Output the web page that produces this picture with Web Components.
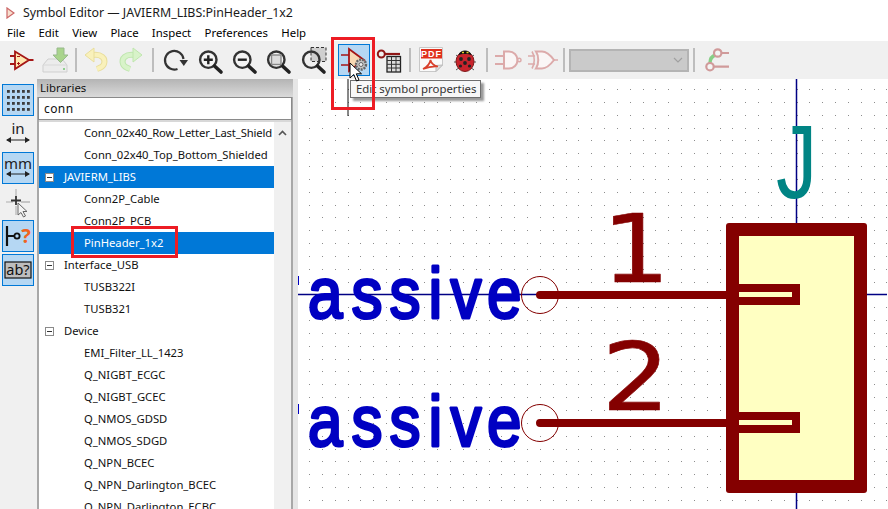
<!DOCTYPE html>
<html>
<head>
<meta charset="utf-8">
<title>Symbol Editor</title>
<style>
html,body{margin:0;padding:0;background:#f0f0f0;}
body{width:888px;height:509px;overflow:hidden;position:relative;font-family:"Noto Sans","Open Sans",sans-serif;}
</style>
</head>
<body>
<editor-app>
    <title-bar>Symbol Editor — JAVIERM_LIBS:PinHeader_1x2</title-bar>
    <menu-bar>
        <menu-item>File</menu-item><menu-item>Edit</menu-item><menu-item>View</menu-item><menu-item>Place</menu-item><menu-item>Inspect</menu-item><menu-item>Preferences</menu-item><menu-item>Help</menu-item>
    </menu-bar>
    <top-toolbar>
        <tool-btn icon="symbol"></tool-btn>
        <tool-btn icon="save"></tool-btn>
        <tool-sep></tool-sep>
        <tool-btn icon="undo"></tool-btn>
        <tool-btn icon="redo"></tool-btn>
        <tool-sep wide></tool-sep>
        <tool-btn icon="refresh"></tool-btn>
        <tool-btn icon="zoomin"></tool-btn>
        <tool-btn icon="zoomout"></tool-btn>
        <tool-btn icon="zoomfit"></tool-btn>
        <tool-btn icon="zoomsel"></tool-btn>
        <tool-sep blank></tool-sep>
        <tool-btn icon="props" active></tool-btn>
        <tool-btn icon="pintable"></tool-btn>
        <tool-sep style="width:8.6px"></tool-sep>
        <tool-btn icon="pdf"></tool-btn>
        <tool-btn icon="bug"></tool-btn>
        <tool-sep style="width:8px"></tool-sep>
        <tool-btn icon="and"></tool-btn>
        <tool-btn icon="or"></tool-btn>
        <tool-sep wide></tool-sep>
        <unit-select></unit-select>
        <tool-sep wide></tool-sep>
        <tool-btn icon="pinswap"></tool-btn>
    </top-toolbar>
    <work-area>
        <side-toolbar>
            <side-btn icon="grid" active></side-btn>
            <side-btn icon="inch"></side-btn>
            <side-btn icon="mm" active></side-btn>
            <side-btn icon="cross"></side-btn>
            <side-btn icon="pinq" active></side-btn>
            <side-btn icon="abq" active></side-btn>
        </side-toolbar>
        <lib-panel>
            <tree-row leaf style="letter-spacing:-.12px">Conn_02x40_Row_Letter_Last_Shield</tree-row>
            <tree-row leaf>Conn_02x40_Top_Bottom_Shielded</tree-row>
            <tree-row selected>JAVIERM_LIBS</tree-row>
            <tree-row leaf>Conn2P_Cable</tree-row>
            <tree-row leaf>Conn2P_PCB</tree-row>
            <tree-row leaf selected>PinHeader_1x2</tree-row>
            <tree-row>Interface_USB</tree-row>
            <tree-row leaf>TUSB322I</tree-row>
            <tree-row leaf>TUSB321</tree-row>
            <tree-row>Device</tree-row>
            <tree-row leaf>EMI_Filter_LL_1423</tree-row>
            <tree-row leaf>Q_NIGBT_ECGC</tree-row>
            <tree-row leaf>Q_NIGBT_GCEC</tree-row>
            <tree-row leaf>Q_NMOS_GDSD</tree-row>
            <tree-row leaf>Q_NMOS_SDGD</tree-row>
            <tree-row leaf>Q_NPN_BCEC</tree-row>
            <tree-row leaf>Q_NPN_Darlington_BCEC</tree-row>
            <tree-row leaf>Q_NPN_Darlington_ECBC</tree-row>
        </lib-panel>
        <sch-canvas></sch-canvas>
    </work-area>
</editor-app>

<!-- things lying over the ui -->
<hover-tip style="left:350px;top:80px">Edit symbol properties</hover-tip>
<mouse-arrow style="left:349px;top:62px"></mouse-arrow>
<red-box style="left:331px;top:37px;width:38px;height:67px"></red-box>
<red-box style="left:71px;top:226px;width:101px;height:26px"></red-box>

<script>
const RED = '#a51616';
const FADE = '#dcaaaa';

const mag = (inner) => `
    <circle cx="12.3" cy="13.7" r="8.2" fill="#f4f4f4" stroke="#333" stroke-width="2.4"/>
    <path d="M18.5 20L25 26" stroke="#222" stroke-width="3.6" stroke-linecap="round"/>${inner}`;

// top toolbar icons, 28x28 box
const ICONS = {
    symbol: `<path d="M8 5.5L22 14L8 23Z" fill="#ffe7b0" stroke="${RED}" stroke-width="1.8"/>
        <path d="M3 10h5M3 18h5M22 14h4.5" stroke="${RED}" stroke-width="2"/>
        <path d="M10 10.5h3M10 17.5h3M11.500 16v3" stroke="${RED}" stroke-width="1"/>`,
    save: `<path d="M7 13H21L26 19V26H2V19Z" fill="#ececec" stroke="#cfcfcf"/>
        <path d="M2 19H26" stroke="#d8d8d8"/>
        <rect x="22" y="22" width="2" height="2" fill="#8fd08f"/>
        <path d="M16 2H23V9H27L19.500 16.500L12 9H16Z" fill="#a9d48c" stroke="#98b98c"/>`,
    undo: `<path d="M11 9C19 8 24 12 22 18C21 21 18 22 15 23" fill="none" stroke="#e9de9c" stroke-width="6"/>
        <path d="M11 9C19 8 24 12 22 18C21 21 18 22 15 23" fill="none" stroke="#f9f1bb" stroke-width="4"/>
        <path d="M3 9L12 2V16Z" fill="#f9f1bb" stroke="#e9de9c"/>`,
    redo: `<path d="M17 9C9 8 4 12 6 18C7 21 10 22 13 23" fill="none" stroke="#bfe6ae" stroke-width="6"/>
        <path d="M17 9C9 8 4 12 6 18C7 21 10 22 13 23" fill="none" stroke="#d8f3c9" stroke-width="4"/>
        <path d="M25 9L16 2V16Z" fill="#d8f3c9" stroke="#bfe6ae"/>`,
    refresh: `<path d="M16.500 23A9.300 9.300 0 1 1 22.500 13" fill="none" stroke="#333" stroke-width="2.200"/>
        <path d="M18.500 14H27L22.800 20Z" fill="#333"/>`,
    zoomin: mag(`<path d="M7.800 13.700H16.800M12.300 9.200V18.200" stroke="#222" stroke-width="2.400"/>`),
    zoomout: mag(`<path d="M7.800 13.700H16.800" stroke="#222" stroke-width="2.400"/>`),
    zoomfit: mag(`<rect x="7.500" y="9" width="9.500" height="9.500" fill="#ddd" stroke="#888" stroke-width="1.400"/>`),
    zoomsel: `<rect x="12" y="1.500" width="15" height="14" fill="#cfcfcf"/>` + `
        <circle cx="12.300" cy="13.700" r="8.200" fill="none" stroke="#333" stroke-width="2.400"/>
        <path d="M18.500 20L25 26" stroke="#222" stroke-width="3.600" stroke-linecap="round"/>
        <rect x="12" y="1.500" width="15" height="14" fill="none" stroke="#333" stroke-dasharray="3 2"/>`,
    props: `<path d="M9 3L24 14L9 25Z" fill="#f8d9b4" stroke="${RED}" stroke-width="1.800"/>
        <path d="M1 9h8M1 19h8" stroke="${RED}" stroke-width="1.600"/>
        <circle cx="21" cy="18.500" r="5" fill="#c4c4c4" stroke="#666" stroke-width="2.400" stroke-dasharray="2 1"/>
        <circle cx="21" cy="18.500" r="2" fill="#eee" stroke="#666"/>`,
    pintable: `<circle cx="7.300" cy="8" r="3.500" fill="none" stroke="#8f1616" stroke-width="2"/>
        <path d="M11 8H26" stroke="#8f1616" stroke-width="2.200"/>
        <rect x="13" y="10.500" width="13.500" height="15.500" fill="#ddd" stroke="#222" stroke-width="1.300"/>
        <path d="M13 14.500H26.500M13 18.300H26.500M13 22H26.500M17.500 10.500V26M22 10.500V26" stroke="#333"/>`,
    pdf: `<path d="M2.500 1.500H25.500V19L19 25.500H2.500Z" fill="#fafafa" stroke="#c8c8c8"/>
        <path d="M25.500 19L19 19.500V25.500Z" fill="#ddd" stroke="#bbb"/>
        <rect x="4" y="3" width="21" height="9.500" fill="#e0301e"/>
        <text x="14.500" y="11" font-family="Liberation Sans" font-weight="700" font-size="9" letter-spacing="1" fill="#fff" text-anchor="middle">PDF</text>
        <path d="M6 23C10 21 13 17 13.500 14C14 17 17 20 21 20.500C17 20 11 21 6 23Z" fill="none" stroke="#d8402c" stroke-width="1.700"/>`,
    bug: `<path d="M5 9L9 12M23 9L19 12M3 16H7M25 16H21M5 24L9 21M23 24L19 21" stroke="#555" stroke-width="1"/>
        <ellipse cx="14" cy="15.500" rx="9" ry="10" fill="#c8232c" stroke="#7d1a1a"/>
        <path d="M7.500 9C9 3 19 3 20.500 9C18 7.500 10 7.500 7.500 9Z" fill="#111"/>
        <path d="M11 6.500h2M15.500 6.500h2" stroke="#e6d22c" stroke-width="1.500"/>
        <circle cx="10" cy="13" r="1.900" fill="#222"/><circle cx="18" cy="13" r="1.900" fill="#222"/>
        <circle cx="14" cy="17" r="1.900" fill="#222"/><circle cx="9.500" cy="20" r="1.600" fill="#222"/><circle cx="18.500" cy="20" r="1.600" fill="#222"/>`,
    and: `<path d="M10 5.500H15A8.500 8.500 0 0 1 15 22.500H10Z" fill="#faf6f6" stroke="${FADE}" stroke-width="2"/>
        <path d="M1 10H10M1 18H10" stroke="${FADE}" stroke-width="2"/>
        <circle cx="25.200" cy="14" r="1.800" fill="none" stroke="${FADE}" stroke-width="1.400"/>`,
    or: `<path d="M8 5.500H14C19 5.500 23 10 26 14C23 18 19 22.500 14 22.500H8C11 18 11 10 8 5.500Z" fill="#faf6f6" stroke="${FADE}" stroke-width="2"/>
        <path d="M4 5.500C7 10 7 18 4 22.500M0 10H7M0 18H7M26 14H30" fill="none" stroke="${FADE}" stroke-width="1.600"/>`,
    pinswap: `<path d="M7 17C7 12 9 10 13 9" fill="none" stroke="#86cf86" stroke-width="3.400"/>
        <circle cx="14.700" cy="7" r="3.700" fill="#f4f4f4" stroke="#d09a9a" stroke-width="2.200"/>
        <circle cx="7" cy="20.700" r="3.700" fill="#f4f4f4" stroke="#d09a9a" stroke-width="2.200"/>
        <path d="M18.500 7H26M11 20.700H26" stroke="#d09a9a" stroke-width="2.200"/>`
};

const arrows = (y) => `<path d="M3 ${y}H25" stroke="#222" stroke-width="1"/>
    <path d="M2 ${y}L7 ${y-3}V${y+3}ZM26 ${y}L21 ${y-3}V${y+3}Z" fill="#222"/>`;

// left toolbar icons, 28x28 box
const SIDE_ICONS = {
    grid: [5,11,17,23].map(y => [4,9,14,19,24].map(x => `<rect x="${x-1}" y="${y-1}" width="2.800" height="2.800" fill="#3c3c3c"/>`).join('')).join(''),
    inch: `<text x="14" y="14" font-family="Noto Sans" font-size="15" fill="#222" text-anchor="middle">in</text>` + arrows(20),
    mm: `<text x="14" y="14.500" font-family="Noto Sans" font-size="15" fill="#222" text-anchor="middle">mm</text>` + arrows(20),
    cross: `<path d="M12 1V10M12 18V27M2 14H9" stroke="#c4c4c4" stroke-width="1.600"/>
        <path d="M7 12.500H17M12 8V17" stroke="#333" stroke-width="1.800"/>
        <path d="M17 14H26" stroke="#bbb" stroke-width="1.600"/>
        <path d="M14 15V27L17 24.500L19.500 29L21.500 28L19 23.500H23Z" fill="#f4f4f4" stroke="#666"/>`,
    pinq: `<path d="M3 4V24M3 14H10" stroke="#111" stroke-width="2.200"/>
        <circle cx="13" cy="14" r="2.600" fill="none" stroke="#111" stroke-width="1.800"/>
        <text x="22" y="21" font-family="Noto Sans" font-weight="700" font-size="20" fill="#f0641e" text-anchor="middle">?</text>`,
    abq: `<rect x="1" y="6" width="26" height="16" fill="#bdbdbd" stroke="#111" stroke-width="1.200"/>
        <text x="14" y="19" font-family="Noto Sans" font-size="14.500" fill="#111" text-anchor="middle">ab?</text>`
};

class EditorApp extends HTMLElement{
    constructor(){
        super();
        this.attachShadow({mode:'open'});
        this.shadowRoot.innerHTML = `<style>
            :host{display:flex;flex-direction:column;width:888px;height:509px;background:#f0f0f0;overflow:hidden;}
        </style><slot></slot>`;
    }
}

class TitleBar extends HTMLElement{
    constructor(){
        super();
        this.attachShadow({mode:'open'});
        this.shadowRoot.innerHTML = `<style>
            :host{display:flex;align-items:center;height:25px;background:#fff;color:#1a1a1a;font-size:12.400px;padding-left:6px;gap:8px;flex:none;white-space:nowrap;}
        </style>
        <svg width="9" height="12" viewBox="0 0 9 12"><path d="M1 1L8 6L1 11Z" fill="#f7e0d0" stroke="#c66" stroke-width="1.200"/></svg>
        <slot></slot>`;
    }
}

class MenuBar extends HTMLElement{
    constructor(){
        super();
        this.attachShadow({mode:'open'});
        this.shadowRoot.innerHTML = `<style>
            :host{display:flex;align-items:center;height:16px;background:#fff;padding-left:7px;gap:13.300px;flex:none;}
        </style><slot></slot>`;
    }
}

class MenuItem extends HTMLElement{
    constructor(){
        super();
        this.attachShadow({mode:'open'});
        this.shadowRoot.innerHTML = `<style>
            :host{display:block;font-size:11.400px;line-height:16px;color:#000;}
        </style><slot></slot>`;
    }
}

class TopToolbar extends HTMLElement{
    constructor(){
        super();
        this.attachShadow({mode:'open'});
        this.shadowRoot.innerHTML = `<style>
            :host{display:flex;align-items:center;height:38px;background:#f0f0f0;padding-left:3.8px;flex:none;}
        </style><slot></slot>`;
    }
}

class ToolBtn extends HTMLElement{
    constructor(){
        super();
        this.attachShadow({mode:'open'});
        this.shadowRoot.innerHTML = `<style>
            :host{display:flex;align-items:center;justify-content:center;width:34.4px;height:32px;flex:none;}
            .box{width:32px;height:32px;box-sizing:border-box;display:flex;align-items:center;justify-content:center;}
            :host([active]) .box{background:#b5d7f3;border:1px solid #0078d7;}
            svg{overflow:visible;flex:none;}
        </style>
        <div class="box"><svg width="28" height="28" viewBox="0 0 28 28">${ICONS[this.getAttribute('icon')]}</svg></div>`;
    }
}

class ToolSep extends HTMLElement{
    constructor(){
        super();
        this.attachShadow({mode:'open'});
        this.shadowRoot.innerHTML = `<style>
            :host{display:flex;justify-content:center;width:6.6px;flex:none;}
            :host([wide]){width:10px;}
            :host([blank]) .line{visibility:hidden;}
            .line{width:2px;height:24px;background:#bdbdbd;}
        </style><div class="line"></div>`;
    }
}

class UnitSelect extends HTMLElement{
    constructor(){
        super();
        this.attachShadow({mode:'open'});
        this.shadowRoot.innerHTML = `<style>
            :host{display:flex;align-items:center;justify-content:flex-end;width:120px;height:23px;box-sizing:border-box;background:#cacaca;border:2px solid #b4b4b4;padding-right:4px;flex:none;}
        </style>
        <svg width="10" height="6" viewBox="0 0 10 6"><path d="M1 1L5 5L9 1" fill="none" stroke="#a0a0a0" stroke-width="1.200"/></svg>`;
    }
}

class WorkArea extends HTMLElement{
    constructor(){
        super();
        this.attachShadow({mode:'open'});
        this.shadowRoot.innerHTML = `<style>
            :host{display:flex;flex:1;min-height:0;}
        </style><slot></slot>`;
    }
}

class SideToolbar extends HTMLElement{
    constructor(){
        super();
        this.attachShadow({mode:'open'});
        this.shadowRoot.innerHTML = `<style>
            :host{display:flex;flex-direction:column;gap:2px;width:37px;box-sizing:border-box;padding:5px 0 0 2px;flex:none;}
        </style><slot></slot>`;
    }
}

class SideBtn extends HTMLElement{
    constructor(){
        super();
        this.attachShadow({mode:'open'});
        this.shadowRoot.innerHTML = `<style>
            :host{display:flex;align-items:center;justify-content:center;width:32px;height:32px;box-sizing:border-box;border:1px solid transparent;}
            :host([active]){background:#b5d7f3;border-color:#0078d7;}
            svg{overflow:visible;}
        </style>
        <svg width="28" height="28" viewBox="0 0 28 28">${SIDE_ICONS[this.getAttribute('icon')]}</svg>`;
    }
}

class LibPanel extends HTMLElement{
    constructor(){
        super();
        this.attachShadow({mode:'open'});
        this.shadowRoot.innerHTML = `<style>
            :host{display:flex;flex-direction:column;width:256px;flex:none;box-sizing:border-box;border-right:2px solid #a8a8a8;border-left:2px solid #a8a8a8;min-height:0;}
            .head{height:18px;line-height:17px;font-size:11.400px;margin-left:-2px;margin-right:-2px;padding-left:3px;color:#111;background:linear-gradient(#b4b4b4,#dadada);}
            .search{height:23px;box-sizing:border-box;background:#fff;border:1px solid #8a8a8a;margin:0 -1px 0 -1px;font-size:12px;line-height:21px;padding-left:5px;color:#111;letter-spacing:.4px;}
            .gap{height:2px;background:#d8d8d8;flex:none;}
            .list{display:flex;flex:1;min-height:0;overflow:hidden;}
            .rows{width:235px;overflow:hidden;background:#fff;flex:none;}
            .bar{flex:1;background:#f0f0f0;display:flex;justify-content:center;padding-top:8px;align-items:flex-start;}
        </style>
        <div class="head">Libraries</div>
        <div class="search">conn</div>
        <div class="gap"></div>
        <div class="list">
            <div class="rows"><slot></slot></div>
            <div class="bar"><svg width="9" height="6" viewBox="0 0 9 6"><path d="M1 5L4.500 1.500L8 5" fill="none" stroke="#555" stroke-width="1.600"/></svg></div>
        </div>`;
    }
}

class TreeRow extends HTMLElement{
    constructor(){
        super();
        this.attachShadow({mode:'open'});
        this.shadowRoot.innerHTML = `<style>
            :host{display:flex;align-items:center;height:22px;font-size:11.250px;color:#111;white-space:nowrap;overflow:hidden;padding:0 0 2px 45px;box-sizing:border-box;}
            :host([selected]){background:#0078d7;color:#fff;}
            .box{width:9px;height:9px;box-sizing:border-box;border:1px solid #8a8a8a;background:#fff;display:flex;align-items:center;justify-content:center;margin:2px 10px 0 -39px;flex:none;}
            .box i{display:block;width:5px;height:1px;background:#333;}
            :host([leaf]) .box{display:none;}
        </style>
        <span class="box"><i></i></span><slot></slot>`;
    }
}

class SchCanvas extends HTMLElement{
    constructor(){
        super();
        this.attachShadow({mode:'open'});
        let dots = '';
        // grid dots snap to whole pixels like the real canvas
        for(let gy = 89; gy < 509; gy += 12.84){
            for(let gx = 297.2; gx < 888; gx += 12.83){
                dots += `<rect x="${Math.round(gx)}" y="${Math.round(gy)}" width="1" height="1" fill="#8c8c8c"/>`;
            }
        }
        // per letter places, the stroke font of the editor runs wider than any installed one
        const xs = [309,352.4,390.4,429.5,451.5,488].map(x => (x/.85).toFixed(1)).join(' ');
        const assive = (y) => `<text x="${xs}" y="${y}" transform="scale(.85 1)" font-size="73" fill="#0000c2" stroke="#0000c2" stroke-width="3" stroke-linejoin="round">assive</text>`;
        this.shadowRoot.innerHTML = `<style>
            :host{display:block;flex:1;min-width:0;background:#fff;border-left:5px solid #e6e6e6;position:relative;overflow:hidden;}
            svg{display:block;}
            text{font-family:"Liberation Sans",sans-serif;}
        </style>
        <svg width="589" height="430" viewBox="299 79 589 430">
            ${dots}
            <path d="M797.500 79V509" stroke="#000084" stroke-width="1.500"/>
            <path d="M299 294.500H888" stroke="#000084" stroke-width="1.500"/>
            <path d="M349 79V116" stroke="#111" stroke-width="1"/>
            <path d="M299.500 276V285M299.500 404V414" stroke="#0000c2" stroke-width="1"/>

            ${assive(318.500)}
            ${assive(446.500)}

            <text x="637" y="282" font-size="94" fill="#840000" stroke="#840000" stroke-width=".6" stroke-linejoin="round" text-anchor="middle" style="font-family:'DejaVu Sans'" transform="translate(637 0) scale(1.150 1) translate(-637 0)">1</text>
            <text x="637" y="410" font-size="94" fill="#840000" stroke="#840000" stroke-width=".6" stroke-linejoin="round" text-anchor="middle" style="font-family:'DejaVu Sans'" transform="translate(637 0) scale(1.150 1) translate(-637 0)">2</text>
            <text x="777" y="198" font-size="103" fill="#008484" transform="translate(777 0) scale(.8 1) translate(-777 0)">J</text>

            <rect x="727" y="223" width="141" height="270" rx="3" fill="#840000"/>
            <rect x="740" y="236" width="115" height="244" fill="#ffffc2"/>
            <circle cx="541" cy="295" r="18.500" fill="none" stroke="#840000" stroke-width="1"/>
            <circle cx="541" cy="423" r="18.500" fill="none" stroke="#840000" stroke-width="1"/>
            <path d="M541 295H730M541 423H730" stroke="#840000" stroke-width="8" stroke-linecap="round"/>
            <path d="M734 288H797V301H734M734 416H797V429H734" fill="none" stroke="#840000" stroke-width="8"/>
        </svg>`;
    }
}

class HoverTip extends HTMLElement{
    constructor(){
        super();
        this.attachShadow({mode:'open'});
        this.shadowRoot.innerHTML = `<style>
            :host{position:absolute;display:block;box-sizing:border-box;height:18px;width:131px;background:#f7f7f7;border:1px solid #6e6e6e;box-shadow:3px 3px 2px #9a9a9a;font-size:11.400px;line-height:16px;padding-left:5px;color:#333;white-space:nowrap;}
        </style><slot></slot>`;
    }
}

class MouseArrow extends HTMLElement{
    constructor(){
        super();
        this.attachShadow({mode:'open'});
        this.shadowRoot.innerHTML = `<style>
            :host{position:absolute;display:block;width:15px;height:21px;}
        </style>
        <svg width="15" height="21" viewBox="0 0 15 21"><path d="M1 1V16L4.800 12.500L7.500 19L10 18L7.300 11.800H12.500Z" fill="#fff" stroke="#000" stroke-width="1"/></svg>`;
    }
}

class RedBox extends HTMLElement{
    constructor(){
        super();
        this.attachShadow({mode:'open'});
        this.shadowRoot.innerHTML = `<style>
            :host{position:absolute;display:block;border:3px solid #ed1c24;}
        </style>`;
    }
}

customElements.define('editor-app',EditorApp);
customElements.define('title-bar',TitleBar);
customElements.define('menu-bar',MenuBar);
customElements.define('menu-item',MenuItem);
customElements.define('top-toolbar',TopToolbar);
customElements.define('tool-btn',ToolBtn);
customElements.define('tool-sep',ToolSep);
customElements.define('unit-select',UnitSelect);
customElements.define('work-area',WorkArea);
customElements.define('side-toolbar',SideToolbar);
customElements.define('side-btn',SideBtn);
customElements.define('lib-panel',LibPanel);
customElements.define('tree-row',TreeRow);
customElements.define('sch-canvas',SchCanvas);
customElements.define('hover-tip',HoverTip);
customElements.define('mouse-arrow',MouseArrow);
customElements.define('red-box',RedBox);
</script>
</body>
</html>
